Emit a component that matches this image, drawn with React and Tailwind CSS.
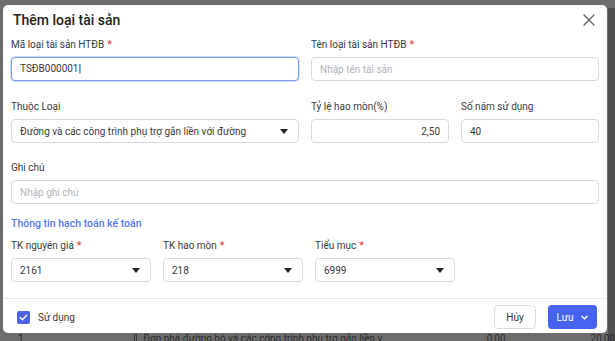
import React from 'react';

const font = { fontFamily: 'Roboto, "Noto Sans", sans-serif' };

const Caret = () => (
  <svg width="8" height="5" viewBox="0 0 8 5" className="shrink-0">
    <path d="M0 0h8L4 5z" fill="#222" />
  </svg>
);

const Label = ({ children, required }) => (
  <div className="h-[14px] mb-[5px] text-[10px] leading-[14px] text-[#3a3a3a]">
    {children}
    {required && <span className="text-[#e53935] ml-[3px] text-[11px]">*</span>}
  </div>
);

const Input = ({ value, placeholder, align = 'left', focused }) => (
  <div
    className={`h-[24px] rounded-[4px] border bg-white px-[8px] flex items-center text-[10px] ${
      focused ? 'border-[#7a9af0] shadow-[0_0_0_1px_rgba(90,130,240,0.25)]' : 'border-[#d6d9de]'
    } ${align === 'right' ? 'justify-end' : ''}`}
  >
    {value ? (
      <span className="text-[#3a3a3a]">
        {value}
        {focused && <span className="text-[#111] text-[11px]">|</span>}
      </span>
    ) : (
      <span className="text-[#b0b4ba]">{placeholder}</span>
    )}
  </div>
);

const Select = ({ value }) => (
  <div className="h-[24px] rounded-[4px] border border-[#d6d9de] bg-white pl-[8px] pr-[10px] flex items-center justify-between text-[10px] text-[#3a3a3a]">
    <span className="truncate">{value}</span>
    <Caret />
  </div>
);

export default function App() {
  return (
    <div className="relative w-[615px] h-[341px] overflow-hidden bg-[#6d6d6d]" style={font}>
      {/* page behind the overlay */}
      <div className="absolute right-0 top-[8px] w-[7px] h-[333px] bg-[#4f4f4f]" />
      <div className="absolute left-0 right-0 top-[333px] h-[10px] flex items-center text-[10px] text-[#2b2b2b]">
        <span className="ml-[18px]">1</span>
        <span className="ml-[110px] w-[8px] h-[8px] border border-[#3a3a3a]" />
        <span className="ml-[6px] whitespace-nowrap">Đơn phá đường bộ và các công trình phụ trợ gắn liền v...</span>
        <span className="ml-[97px]">0,00</span>
        <span className="ml-[85px]">20,00</span>
      </div>

      {/* modal */}
      <div className="absolute left-[3px] top-[5px] w-[604px] h-[328px] rounded-[5px] bg-white flex flex-col">
        <div className="h-[30px] pl-[10px] pr-[12px] flex items-center justify-between">
          <div className="text-[14px] font-medium text-[#222]">Thêm loại tài sản</div>
          <svg width="12" height="12" viewBox="0 0 12 12">
            <path d="M1 1l10 10M11 1L1 11" stroke="#666" strokeWidth="1.4" strokeLinecap="round" />
          </svg>
        </div>

        <div className="px-[8px] pt-[3px] flex-1">
          <div className="grid grid-cols-2 gap-x-[12px]">
            <div>
              <Label required>Mã loại tài sản HTĐB</Label>
              <Input value="TSĐB000001" focused />
            </div>
            <div>
              <Label required>Tên loại tài sản HTĐB</Label>
              <Input placeholder="Nhập tên tài sản" />
            </div>
          </div>

          <div className="grid grid-cols-4 gap-x-[12px] mt-[19px]">
            <div className="col-span-2">
              <Label>Thuộc Loại</Label>
              <Select value="Đường và các công trình phụ trợ gắn liền với đường" />
            </div>
            <div>
              <Label>Tỷ lệ hao mòn(%)</Label>
              <Input value="2,50" align="right" />
            </div>
            <div>
              <Label>Số năm sử dụng</Label>
              <Input value="40" />
            </div>
          </div>

          <div className="mt-[18px]">
            <Label>Ghi chú</Label>
            <Input placeholder="Nhập ghi chú" />
          </div>

          <div className="mt-[12px] h-[16px] leading-[16px] text-[10.5px] font-medium text-[#5577f2]">
            Thông tin hạch toán kế toán
          </div>

          <div className="grid grid-cols-[140px_140px_140px] gap-x-[12px] mt-[7px]">
            <div>
              <Label required>TK nguyên giá</Label>
              <Select value="2161" />
            </div>
            <div>
              <Label required>TK hao mòn</Label>
              <Select value="218" />
            </div>
            <div>
              <Label required>Tiểu mục</Label>
              <Select value="6999" />
            </div>
          </div>
        </div>

        <div className="h-[35px] border-t border-[#e6e8ec] pl-[14px] pr-[10px] pt-[2px] flex items-center justify-between">
          <div className="flex items-center gap-[8px]">
            <div className="w-[13px] h-[13px] rounded-[2px] bg-[#4a63e7] flex items-center justify-center">
              <svg width="9" height="9" viewBox="0 0 10 10">
                <path d="M1.5 5.2l2.3 2.3L8.5 2.5" stroke="#fff" strokeWidth="1.6" fill="none" strokeLinecap="round" strokeLinejoin="round" />
              </svg>
            </div>
            <span className="text-[10px] text-[#3a3a3a]">Sử dụng</span>
          </div>
          <div className="flex items-center gap-[12px]">
            <button className="h-[24px] w-[42px] rounded-[4px] border border-[#d9dce1] bg-white text-[10px] text-[#333]">
              Hủy
            </button>
            <button className="h-[24px] w-[49px] rounded-[4px] bg-[#4663f0] text-white text-[10px] flex items-center justify-center gap-[8px]">
              Lưu
              <svg width="7" height="5" viewBox="0 0 8 5">
                <path d="M1 1l3 3 3-3" stroke="#fff" strokeWidth="1.5" fill="none" strokeLinecap="round" />
              </svg>
            </button>
          </div>
        </div>
      </div>
    </div>
  );
}
